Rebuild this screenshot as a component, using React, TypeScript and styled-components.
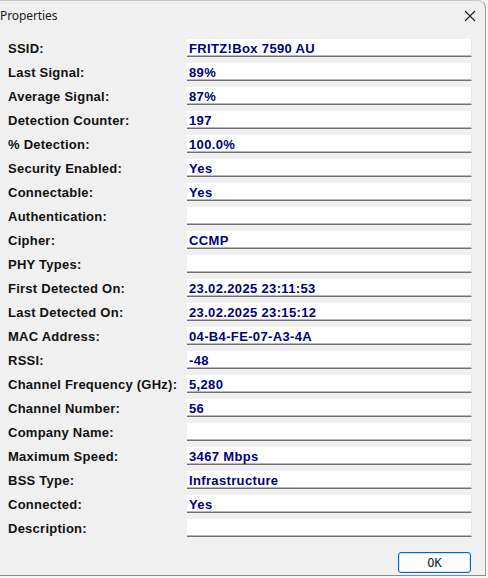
import React from 'react'
import styled, { createGlobalStyle } from 'styled-components'

const GlobalStyle = createGlobalStyle`
  html, body {
    margin: 0;
    padding: 0;
    background: #f7f7f7;
  }
`

const Window = styled.div`
  width: 486px;
  height: 576px;
  box-sizing: border-box;
  background: #f0f0f0;
  border-top: 1px solid #c8c8c8;
  border-right: 1px solid #9c9c9c;
  border-bottom: 1px solid #8a8a8a;
  border-top-right-radius: 8px;
  display: flex;
  flex-direction: column;
  overflow: hidden;
`

const TitleBar = styled.div`
  height: 29px;
  display: flex;
  align-items: center;
  justify-content: space-between;
  padding: 0 7px 0 0;
  font-family: 'Noto Sans', 'Open Sans', sans-serif;
  font-size: 12px;
  color: #1a1a1a;
`

const TitleText = styled.span`
  letter-spacing: -0.1px;
`

const CloseButton = styled.div`
  width: 16px;
  height: 16px;
  display: flex;
  align-items: center;
  justify-content: center;
`

const Body = styled.div`
  flex: 1;
  padding: 6px 0 0 8px;
  display: flex;
  flex-direction: column;
`

const Grid = styled.div`
  display: grid;
  grid-template-columns: 179px 285px;
  grid-auto-rows: 24px;
`

const Label = styled.div`
  display: flex;
  align-items: center;
  padding-top: 1px;
  font-family: 'Liberation Sans', Arial, sans-serif;
  font-weight: bold;
  font-size: 13px;
  letter-spacing: 0.25px;
  color: #111;
  white-space: nowrap;
`

const FieldCell = styled.div`
  display: flex;
  align-items: center;
`

const Field = styled.div`
  width: 100%;
  height: 18px;
  box-sizing: border-box;
  background: #fff;
  border-right: 1px solid #e6e6e6;
  border-bottom: 1px solid #707070;
  box-shadow: inset 0 -1px 0 #b8b8b8;
  padding: 1px 0 0 2px;
  display: flex;
  align-items: center;
  font-family: 'Liberation Sans', Arial, sans-serif;
  font-weight: bold;
  font-size: 13px;
  letter-spacing: 0.35px;
  color: #000080;
  white-space: nowrap;
`

const Footer = styled.div`
  display: flex;
  justify-content: flex-end;
  padding: 12px 14px 0 0;
`

const OkButton = styled.button`
  width: 73px;
  height: 21px;
  box-sizing: border-box;
  border: 1px solid #0067c0;
  border-radius: 3px;
  background: #fdfdfd;
  box-shadow: inset 0 0 0 1px #cfe4f6;
  font-family: 'DejaVu Sans Mono', 'Liberation Mono', monospace;
  font-size: 12px;
  color: #1a1a1a;
  padding: 0;
`

const rows: [string, string][] = [
  ['SSID:', 'FRITZ!Box 7590 AU'],
  ['Last Signal:', '89%'],
  ['Average Signal:', '87%'],
  ['Detection Counter:', '197'],
  ['% Detection:', '100.0%'],
  ['Security Enabled:', 'Yes'],
  ['Connectable:', 'Yes'],
  ['Authentication:', ''],
  ['Cipher:', 'CCMP'],
  ['PHY Types:', ''],
  ['First Detected On:', '23.02.2025 23:11:53'],
  ['Last Detected On:', '23.02.2025 23:15:12'],
  ['MAC Address:', '04-B4-FE-07-A3-4A'],
  ['RSSI:', '-48'],
  ['Channel Frequency (GHz):', '5,280'],
  ['Channel Number:', '56'],
  ['Company Name:', ''],
  ['Maximum Speed:', '3467 Mbps'],
  ['BSS Type:', 'Infrastructure'],
  ['Connected:', 'Yes'],
  ['Description:', ''],
]

export default function App() {
  return (
    <>
      <GlobalStyle />
      <Window>
        <TitleBar>
          <TitleText>Properties</TitleText>
          <CloseButton>
            <svg width="12" height="12" viewBox="0 0 12 12">
              <path d="M1 1 L11 11 M11 1 L1 11" stroke="#222" strokeWidth="1.1" fill="none" />
            </svg>
          </CloseButton>
        </TitleBar>
        <Body>
          <Grid>
            {rows.map(([label, value]) => (
              <React.Fragment key={label}>
                <Label>{label}</Label>
                <FieldCell>
                  <Field>{value}</Field>
                </FieldCell>
              </React.Fragment>
            ))}
          </Grid>
          <Footer>
            <OkButton>OK</OkButton>
          </Footer>
        </Body>
      </Window>
    </>
  )
}
